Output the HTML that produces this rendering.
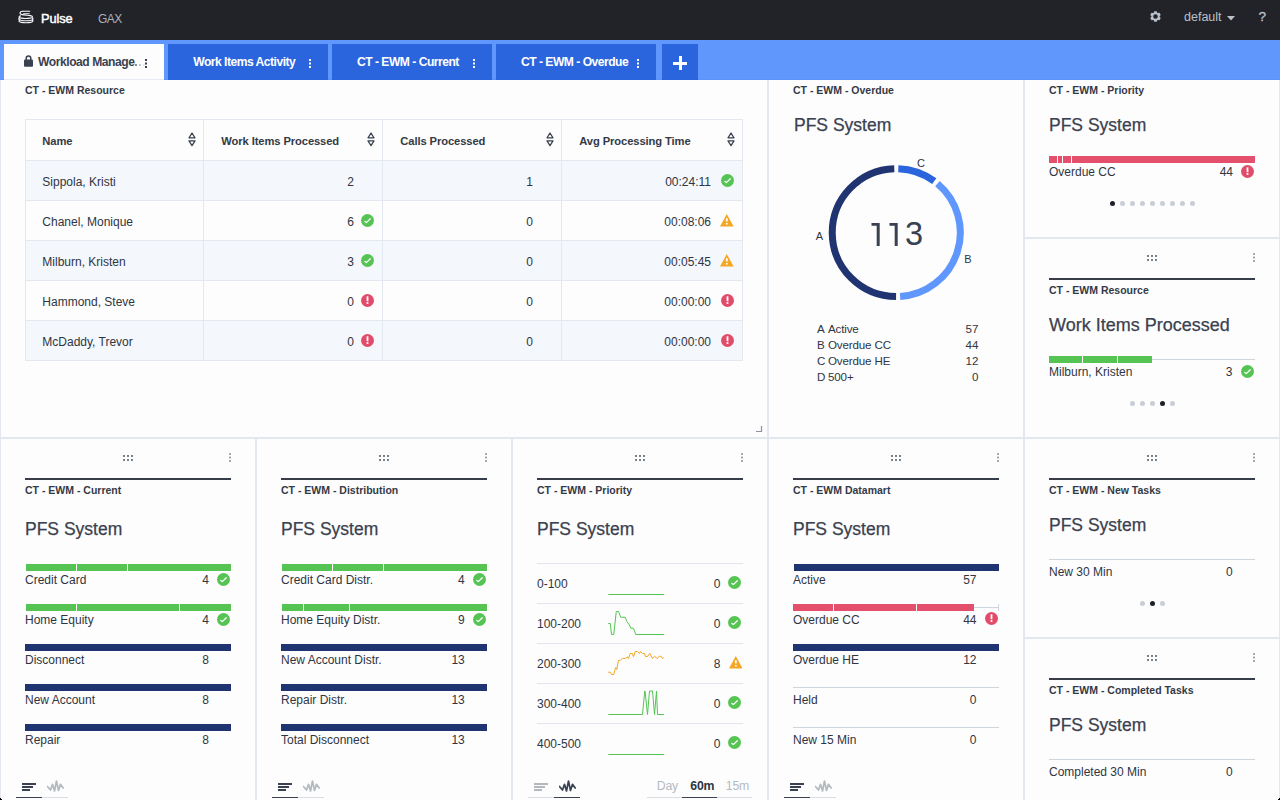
<!DOCTYPE html>
<html><head><meta charset="utf-8"><title>Pulse</title>
<style>
html,body{margin:0;padding:0;width:1280px;height:800px;overflow:hidden;background:#fdfdfd;font-family:"Liberation Sans", sans-serif;}
.t{position:absolute;white-space:nowrap;line-height:1;}
.r{position:absolute;}
.panel{position:absolute;box-sizing:border-box;border:1px solid #e3e8f0;background:#fdfdfd;}
</style></head><body>

<div class="r" style="left:0px;top:0px;width:1280px;height:40px;background:#212328;"></div>
<svg class="r" style="left:17px;top:10px" width="18" height="14.3" viewBox="0 0 18 16" preserveAspectRatio="none">
<g fill="none" stroke="#f4f6fa" stroke-width="1.25" stroke-linecap="round">
<path d="M5.6 1.4 H12.6"/>
<path d="M5.6 1.4 C2.4 1.6 2.2 4.4 5 5.2 C7.5 5.9 11 5.9 13.4 6.3"/>
<path d="M6.6 4.2 H12.2"/>
<path d="M13.4 6.3 C16.2 6.9 16.2 8.6 13.2 9.1 C10.5 9.5 6.5 9.5 4.2 9.1 C1.6 8.6 1.6 7.2 3.4 6.6"/>
<path d="M2.6 8.6 C1.2 9.4 1.4 10.8 4 11.5 C6.5 12.1 11.5 12.1 14 11.5 C16.4 10.8 16.4 9.6 15.2 8.9"/>
<path d="M2.6 11.3 C1.4 12.1 1.8 13.3 4.2 13.8 C6.8 14.3 11.2 14.3 13.8 13.8 C16.2 13.3 16.4 12.2 15.2 11.5"/>
</g></svg>
<div class="t" style="left:41px;top:12.76px;font-size:12.8px;font-weight:400;color:#ffffff;letter-spacing:-0.1px;-webkit-text-stroke:0.45px #ffffff;">Pulse</div>
<div class="t" style="left:98px;top:13.14px;font-size:12px;font-weight:400;color:#a9b0bc;letter-spacing:-0.5px;">GAX</div>
<svg class="r" style="left:1150px;top:10.9px" width="11" height="11" viewBox="0 0 11 11">
<path fill="#b9c0ca" fill-rule="evenodd" d="M3.79 1.66 L4.26 0.14 L6.74 0.14 L7.21 1.66 L7.97 2.10 L9.52 1.75 L10.76 3.89 L9.68 5.06 L9.68 5.94 L10.76 7.11 L9.52 9.25 L7.97 8.90 L7.21 9.34 L6.74 10.86 L4.26 10.86 L3.79 9.34 L3.03 8.90 L1.48 9.25 L0.24 7.11 L1.32 5.94 L1.32 5.06 L0.24 3.89 L1.48 1.75 L3.03 2.10 Z M5.5 3.2 A2.3 2.3 0 1 0 5.5 7.8 A2.3 2.3 0 1 0 5.5 3.2 Z"/>
</svg>
<div class="t" style="left:1184px;top:11.12px;font-size:12.5px;font-weight:400;color:#b9c0ca;">default</div>
<svg class="r" style="left:1227px;top:15.5px" width="8" height="5" viewBox="0 0 8 5"><path d="M0 0 H8 L4 4.5 Z" fill="#b9c0ca"/></svg>
<div class="t" style="left:1258.6px;top:10.09px;font-size:13.6px;font-weight:400;color:#b9c0ca;-webkit-text-stroke:0.3px #b9c0ca;">?</div>
<div class="r" style="left:0px;top:40px;width:1280px;height:40px;background:#6097fc;"></div>
<div class="r" style="left:0px;top:79px;width:1280px;height:1px;background:#5a92f8;"></div>
<div class="r" style="left:4px;top:44px;width:160px;height:36px;background:#fdfdfd;"></div>
<div class="r" style="left:4px;top:79px;width:160px;height:1px;background:#e6eaf1;"></div>
<svg class="r" style="left:24px;top:55px" width="9" height="12" viewBox="0 0 9 12">
<path d="M2.2 5 V3.3 A2.3 2.3 0 0 1 6.8 3.3 V5" fill="none" stroke="#3a4150" stroke-width="1.5"/>
<rect x="0" y="4.6" width="9" height="7.2" rx="1" fill="#3a4150"/></svg>
<div class="t" style="left:38px;top:55.56px;font-size:12.1px;font-weight:700;color:#3a4150;letter-spacing:-0.45px;">Workload Manage</div>
<div class="r" style="left:135px;top:64px;width:1.6px;height:1.8px;background:#8a8f99;"></div>
<div class="r" style="left:139px;top:64px;width:1.6px;height:1.8px;background:#c3c7ce;"></div>
<div class="r" style="left:143px;top:64px;width:1.6px;height:1.8px;background:#e6e8ec;"></div>
<svg class="r" style="left:145px;top:59px" width="2" height="10" viewBox="0 0 2 10"><rect x="0.00" y="0.00" width="2" height="2" fill="#3a4150"/><rect x="0.00" y="3.50" width="2" height="2" fill="#3a4150"/><rect x="0.00" y="7.00" width="2" height="2" fill="#3a4150"/></svg>
<div class="r" style="left:168px;top:44px;width:160px;height:36px;background:#2b65dd;"></div>
<div class="t" style="left:193.2px;top:55.56px;font-size:12.1px;font-weight:700;color:#ffffff;letter-spacing:-0.5px;">Work Items Activity</div>
<svg class="r" style="left:309px;top:59px" width="2" height="10" viewBox="0 0 2 10"><rect x="0.00" y="0.00" width="2" height="2" fill="#ffffff"/><rect x="0.00" y="3.50" width="2" height="2" fill="#ffffff"/><rect x="0.00" y="7.00" width="2" height="2" fill="#ffffff"/></svg>
<div class="r" style="left:332px;top:44px;width:160px;height:36px;background:#2b65dd;"></div>
<div class="t" style="left:357px;top:55.56px;font-size:12.1px;font-weight:700;color:#ffffff;letter-spacing:-0.5px;">CT - EWM - Current</div>
<svg class="r" style="left:473px;top:59px" width="2" height="10" viewBox="0 0 2 10"><rect x="0.00" y="0.00" width="2" height="2" fill="#ffffff"/><rect x="0.00" y="3.50" width="2" height="2" fill="#ffffff"/><rect x="0.00" y="7.00" width="2" height="2" fill="#ffffff"/></svg>
<div class="r" style="left:496px;top:44px;width:160px;height:36px;background:#2b65dd;"></div>
<div class="t" style="left:521px;top:55.56px;font-size:12.1px;font-weight:700;color:#ffffff;letter-spacing:-0.5px;">CT - EWM - Overdue</div>
<svg class="r" style="left:637px;top:59px" width="2" height="10" viewBox="0 0 2 10"><rect x="0.00" y="0.00" width="2" height="2" fill="#ffffff"/><rect x="0.00" y="3.50" width="2" height="2" fill="#ffffff"/><rect x="0.00" y="7.00" width="2" height="2" fill="#ffffff"/></svg>
<div class="r" style="left:662px;top:44px;width:36px;height:36px;background:#2b65dd;"></div>
<div class="r" style="left:679px;top:56px;width:2.6px;height:14px;background:#ffffff;"></div>
<div class="r" style="left:673px;top:62px;width:14px;height:2.6px;background:#ffffff;"></div>
<div class="panel" style="left:0;top:80px;width:768px;height:358px;border-top:none"></div>
<div class="panel" style="left:768px;top:80px;width:256px;height:358px;border-top:none"></div>
<div class="panel" style="left:1024px;top:80px;width:256px;height:158px;border-top:none"></div>
<div class="panel" style="left:1024px;top:238px;width:256px;height:200px"></div>
<div class="panel" style="left:0px;top:438px;width:256px;height:400px"></div>
<div class="panel" style="left:256px;top:438px;width:256px;height:400px"></div>
<div class="panel" style="left:512px;top:438px;width:256px;height:400px"></div>
<div class="panel" style="left:768px;top:438px;width:256px;height:400px"></div>
<div class="panel" style="left:1024px;top:438px;width:256px;height:200px"></div>
<div class="panel" style="left:1024px;top:638px;width:256px;height:200px"></div>
<div class="t" style="left:25px;top:85.11px;font-size:10.5px;font-weight:700;color:#333a46;">CT - EWM Resource</div>
<div class="r" style="left:25px;top:119px;width:718px;height:242px;background:#e3e8f0;"></div>
<div class="r" style="left:26px;top:120px;width:716px;height:40px;background:#fdfdfd;"></div>
<div class="r" style="left:26px;top:161px;width:716px;height:39px;background:#f4f7fb;"></div>
<div class="r" style="left:26px;top:201px;width:716px;height:39px;background:#fdfdfd;"></div>
<div class="r" style="left:26px;top:241px;width:716px;height:39px;background:#f4f7fb;"></div>
<div class="r" style="left:26px;top:281px;width:716px;height:39px;background:#fdfdfd;"></div>
<div class="r" style="left:26px;top:321px;width:716px;height:39px;background:#f4f7fb;"></div>
<div class="r" style="left:203px;top:119px;width:1px;height:242px;background:#e3e8f0;"></div>
<div class="r" style="left:382px;top:119px;width:1px;height:242px;background:#e3e8f0;"></div>
<div class="r" style="left:561px;top:119px;width:1px;height:242px;background:#e3e8f0;"></div>
<div class="t" style="left:42.3px;top:135.52px;font-size:11.2px;font-weight:700;color:#333a46;letter-spacing:-0.1px;">Name</div>
<svg class="r" style="left:188px;top:132.2px" width="8" height="15" viewBox="0 0 8 15"><path d="M4 1 L7 5.8 H1 Z M1 8.8 H7 L4 13.6 Z" fill="none" stroke="#3a4150" stroke-width="1.25" stroke-linejoin="round"/></svg>
<div class="t" style="left:221.3px;top:135.52px;font-size:11.2px;font-weight:700;color:#333a46;letter-spacing:-0.1px;">Work Items Processed</div>
<svg class="r" style="left:367px;top:132.2px" width="8" height="15" viewBox="0 0 8 15"><path d="M4 1 L7 5.8 H1 Z M1 8.8 H7 L4 13.6 Z" fill="none" stroke="#3a4150" stroke-width="1.25" stroke-linejoin="round"/></svg>
<div class="t" style="left:400.3px;top:135.52px;font-size:11.2px;font-weight:700;color:#333a46;letter-spacing:-0.1px;">Calls Processed</div>
<svg class="r" style="left:546px;top:132.2px" width="8" height="15" viewBox="0 0 8 15"><path d="M4 1 L7 5.8 H1 Z M1 8.8 H7 L4 13.6 Z" fill="none" stroke="#3a4150" stroke-width="1.25" stroke-linejoin="round"/></svg>
<div class="t" style="left:579.3px;top:135.52px;font-size:11.2px;font-weight:700;color:#333a46;letter-spacing:-0.1px;">Avg Processing Time</div>
<svg class="r" style="left:727px;top:132.2px" width="8" height="15" viewBox="0 0 8 15"><path d="M4 1 L7 5.8 H1 Z M1 8.8 H7 L4 13.6 Z" fill="none" stroke="#3a4150" stroke-width="1.25" stroke-linejoin="round"/></svg>
<div class="t" style="left:42.3px;top:175.84px;font-size:12px;font-weight:400;color:#2f3542;">Sippola, Kristi</div>
<div class="t" style="left:-46px;width:400px;text-align:right;top:175.84px;font-size:12px;font-weight:400;color:#2f3542;">2</div>
<div class="t" style="left:133px;width:400px;text-align:right;top:175.84px;font-size:12px;font-weight:400;color:#2f3542;">1</div>
<div class="t" style="left:311px;width:400px;text-align:right;top:175.84px;font-size:12px;font-weight:400;color:#2f3542;">00:24:11</div>
<svg class="r" style="left:721.0px;top:173.8px" width="13" height="13" viewBox="0 0 13 13"><circle cx="6.5" cy="6.5" r="6.5" fill="#55c453"/><path d="M3.9 7.4 L5.4 8.6 L9.3 4.7" fill="none" stroke="#fff" stroke-width="1.25" stroke-linecap="round" stroke-linejoin="round"/></svg>
<div class="t" style="left:42.3px;top:215.84px;font-size:12px;font-weight:400;color:#2f3542;">Chanel, Monique</div>
<div class="t" style="left:-46px;width:400px;text-align:right;top:215.84px;font-size:12px;font-weight:400;color:#2f3542;">6</div>
<svg class="r" style="left:361.0px;top:213.8px" width="13" height="13" viewBox="0 0 13 13"><circle cx="6.5" cy="6.5" r="6.5" fill="#55c453"/><path d="M3.9 7.4 L5.4 8.6 L9.3 4.7" fill="none" stroke="#fff" stroke-width="1.25" stroke-linecap="round" stroke-linejoin="round"/></svg>
<div class="t" style="left:133px;width:400px;text-align:right;top:215.84px;font-size:12px;font-weight:400;color:#2f3542;">0</div>
<div class="t" style="left:311px;width:400px;text-align:right;top:215.84px;font-size:12px;font-weight:400;color:#2f3542;">00:08:06</div>
<svg class="r" style="left:720.20px;top:214.00px" width="13.6" height="12.6" viewBox="0 0 13.6 12.6"><path d="M6.8 0 L13.6 12.6 L0 12.6 Z" fill="#f5a623"/><rect x="5.90" y="4.28" width="1.8" height="3.15" fill="#fff"/><rect x="5.90" y="9.01" width="1.8" height="1.5" fill="#fff"/></svg>
<div class="t" style="left:42.3px;top:255.84px;font-size:12px;font-weight:400;color:#2f3542;">Milburn, Kristen</div>
<div class="t" style="left:-46px;width:400px;text-align:right;top:255.84px;font-size:12px;font-weight:400;color:#2f3542;">3</div>
<svg class="r" style="left:361.0px;top:253.8px" width="13" height="13" viewBox="0 0 13 13"><circle cx="6.5" cy="6.5" r="6.5" fill="#55c453"/><path d="M3.9 7.4 L5.4 8.6 L9.3 4.7" fill="none" stroke="#fff" stroke-width="1.25" stroke-linecap="round" stroke-linejoin="round"/></svg>
<div class="t" style="left:133px;width:400px;text-align:right;top:255.84px;font-size:12px;font-weight:400;color:#2f3542;">0</div>
<div class="t" style="left:311px;width:400px;text-align:right;top:255.84px;font-size:12px;font-weight:400;color:#2f3542;">00:05:45</div>
<svg class="r" style="left:720.20px;top:254.00px" width="13.6" height="12.6" viewBox="0 0 13.6 12.6"><path d="M6.8 0 L13.6 12.6 L0 12.6 Z" fill="#f5a623"/><rect x="5.90" y="4.28" width="1.8" height="3.15" fill="#fff"/><rect x="5.90" y="9.01" width="1.8" height="1.5" fill="#fff"/></svg>
<div class="t" style="left:42.3px;top:295.84px;font-size:12px;font-weight:400;color:#2f3542;">Hammond, Steve</div>
<div class="t" style="left:-46px;width:400px;text-align:right;top:295.84px;font-size:12px;font-weight:400;color:#2f3542;">0</div>
<svg class="r" style="left:361.0px;top:293.8px" width="13" height="13" viewBox="0 0 13 13"><circle cx="6.5" cy="6.5" r="6.5" fill="#e24c6a"/><rect x="5.6" y="2.3" width="1.8" height="4.9" fill="#fff"/><rect x="5.6" y="8.1" width="1.8" height="1.8" fill="#fff"/></svg>
<div class="t" style="left:133px;width:400px;text-align:right;top:295.84px;font-size:12px;font-weight:400;color:#2f3542;">0</div>
<div class="t" style="left:311px;width:400px;text-align:right;top:295.84px;font-size:12px;font-weight:400;color:#2f3542;">00:00:00</div>
<svg class="r" style="left:721.0px;top:293.8px" width="13" height="13" viewBox="0 0 13 13"><circle cx="6.5" cy="6.5" r="6.5" fill="#e24c6a"/><rect x="5.6" y="2.3" width="1.8" height="4.9" fill="#fff"/><rect x="5.6" y="8.1" width="1.8" height="1.8" fill="#fff"/></svg>
<div class="t" style="left:42.3px;top:335.84px;font-size:12px;font-weight:400;color:#2f3542;">McDaddy, Trevor</div>
<div class="t" style="left:-46px;width:400px;text-align:right;top:335.84px;font-size:12px;font-weight:400;color:#2f3542;">0</div>
<svg class="r" style="left:361.0px;top:333.8px" width="13" height="13" viewBox="0 0 13 13"><circle cx="6.5" cy="6.5" r="6.5" fill="#e24c6a"/><rect x="5.6" y="2.3" width="1.8" height="4.9" fill="#fff"/><rect x="5.6" y="8.1" width="1.8" height="1.8" fill="#fff"/></svg>
<div class="t" style="left:133px;width:400px;text-align:right;top:335.84px;font-size:12px;font-weight:400;color:#2f3542;">0</div>
<div class="t" style="left:311px;width:400px;text-align:right;top:335.84px;font-size:12px;font-weight:400;color:#2f3542;">00:00:00</div>
<svg class="r" style="left:721.0px;top:333.8px" width="13" height="13" viewBox="0 0 13 13"><circle cx="6.5" cy="6.5" r="6.5" fill="#e24c6a"/><rect x="5.6" y="2.3" width="1.8" height="4.9" fill="#fff"/><rect x="5.6" y="8.1" width="1.8" height="1.8" fill="#fff"/></svg>
<svg class="r" style="left:755px;top:425px" width="8" height="8" viewBox="0 0 8 8"><path d="M6.5 1 V6.5 H1" fill="none" stroke="#8a93a0" stroke-width="1.2"/></svg>
<div class="t" style="left:793px;top:85.11px;font-size:10.5px;font-weight:700;color:#333a46;">CT - EWM - Overdue</div>
<div class="t" style="left:794px;top:117.19px;font-size:17.5px;font-weight:400;color:#3a4150;-webkit-text-stroke:0.25px #3a4150;">PFS System</div>
<svg class="r" style="left:768px;top:80px" width="256" height="358"><path d="M130.31 88.63 A64 64 0 0 1 166.28 101.09" fill="none" stroke="#2b65dd" stroke-width="7"/><path d="M169.44 103.57 A64 64 0 0 1 132.10 216.49" fill="none" stroke="#6097fc" stroke-width="7"/><path d="M128.08 216.60 A64 64 0 0 1 126.29 88.63" fill="none" stroke="#1f3470" stroke-width="7"/></svg>
<div class="t" style="left:721px;width:400px;text-align:center;top:157.69px;font-size:11px;font-weight:400;color:#2f3542;">C</div>
<div class="t" style="left:619.5px;width:400px;text-align:center;top:230.69px;font-size:11px;font-weight:400;color:#2f3542;">A</div>
<div class="t" style="left:768px;width:400px;text-align:center;top:253.69px;font-size:11px;font-weight:400;color:#2f3542;">B</div>
<svg class="r" style="left:868px;top:220px" width="16" height="30" viewBox="868 220 16 30"><path fill="#3a4150" d="M871.5 223 H879.7 V246 H876.7 V225.7 H871.5 Z"/></svg>
<svg class="r" style="left:886px;top:220px" width="16" height="30" viewBox="886 220 16 30"><path fill="#3a4150" d="M889.5 223 H897.7 V246 H894.7 V225.7 H889.5 Z"/></svg>
<div class="t" style="left:905px;top:218.29px;font-size:32.5px;font-weight:400;color:#3a4150;">3</div>
<div class="t" style="left:817px;top:323.18px;font-size:11.6px;font-weight:400;color:#2f3542;">A</div>
<div class="t" style="left:828px;top:323.18px;font-size:11.6px;font-weight:400;color:#2f3542;letter-spacing:-0.15px;">Active</div>
<div class="t" style="left:578.5px;width:400px;text-align:right;top:323.18px;font-size:11.6px;font-weight:400;color:#2f3542;">57</div>
<div class="t" style="left:817px;top:339.18px;font-size:11.6px;font-weight:400;color:#2f3542;">B</div>
<div class="t" style="left:828px;top:339.18px;font-size:11.6px;font-weight:400;color:#2f3542;letter-spacing:-0.15px;">Overdue CC</div>
<div class="t" style="left:578.5px;width:400px;text-align:right;top:339.18px;font-size:11.6px;font-weight:400;color:#2f3542;">44</div>
<div class="t" style="left:817px;top:355.18px;font-size:11.6px;font-weight:400;color:#2f3542;">C</div>
<div class="t" style="left:828px;top:355.18px;font-size:11.6px;font-weight:400;color:#2f3542;letter-spacing:-0.15px;">Overdue HE</div>
<div class="t" style="left:578.5px;width:400px;text-align:right;top:355.18px;font-size:11.6px;font-weight:400;color:#2f3542;">12</div>
<div class="t" style="left:817px;top:371.18px;font-size:11.6px;font-weight:400;color:#2f3542;">D</div>
<div class="t" style="left:828px;top:371.18px;font-size:11.6px;font-weight:400;color:#2f3542;letter-spacing:-0.15px;">500+</div>
<div class="t" style="left:578.5px;width:400px;text-align:right;top:371.18px;font-size:11.6px;font-weight:400;color:#2f3542;">0</div>
<div class="t" style="left:1049px;top:85.11px;font-size:10.5px;font-weight:700;color:#333a46;">CT - EWM - Priority</div>
<div class="t" style="left:1049px;top:117.19px;font-size:17.5px;font-weight:400;color:#3a4150;-webkit-text-stroke:0.25px #3a4150;">PFS System</div>
<div class="r" style="left:1049px;top:156px;width:206px;height:7px;background:#e44f6b;"></div>
<div class="r" style="left:1057px;top:156px;width:1px;height:7px;background:#fdfdfd;"></div>
<div class="r" style="left:1062px;top:156px;width:1px;height:7px;background:#fdfdfd;"></div>
<div class="r" style="left:1071px;top:156px;width:1px;height:7px;background:#fdfdfd;"></div>
<div class="t" style="left:1049px;top:165.84px;font-size:12px;font-weight:400;color:#2f3542;">Overdue CC</div>
<div class="t" style="left:833px;width:400px;text-align:right;top:165.84px;font-size:12px;font-weight:400;color:#2f3542;">44</div>
<svg class="r" style="left:1241.1px;top:164.9px" width="13" height="13" viewBox="0 0 13 13"><circle cx="6.5" cy="6.5" r="6.5" fill="#e24c6a"/><rect x="5.6" y="2.3" width="1.8" height="4.9" fill="#fff"/><rect x="5.6" y="8.1" width="1.8" height="1.8" fill="#fff"/></svg>
<div class="r" style="left:1109.9px;top:201.0px;width:5px;height:5px;border-radius:50%;background:#1d2029"></div>
<div class="r" style="left:1119.9px;top:201.0px;width:5px;height:5px;border-radius:50%;background:#c9ced6"></div>
<div class="r" style="left:1129.9px;top:201.0px;width:5px;height:5px;border-radius:50%;background:#c9ced6"></div>
<div class="r" style="left:1139.9px;top:201.0px;width:5px;height:5px;border-radius:50%;background:#c9ced6"></div>
<div class="r" style="left:1149.9px;top:201.0px;width:5px;height:5px;border-radius:50%;background:#c9ced6"></div>
<div class="r" style="left:1159.9px;top:201.0px;width:5px;height:5px;border-radius:50%;background:#c9ced6"></div>
<div class="r" style="left:1169.9px;top:201.0px;width:5px;height:5px;border-radius:50%;background:#c9ced6"></div>
<div class="r" style="left:1179.9px;top:201.0px;width:5px;height:5px;border-radius:50%;background:#c9ced6"></div>
<div class="r" style="left:1189.9px;top:201.0px;width:5px;height:5px;border-radius:50%;background:#c9ced6"></div>
<div class="r" style="left:1147px;top:255px;width:2px;height:2px;background:#7a8593;"></div>
<div class="r" style="left:1151px;top:255px;width:2px;height:2px;background:#7a8593;"></div>
<div class="r" style="left:1155px;top:255px;width:2px;height:2px;background:#7a8593;"></div>
<div class="r" style="left:1147px;top:259px;width:2px;height:2px;background:#7a8593;"></div>
<div class="r" style="left:1151px;top:259px;width:2px;height:2px;background:#7a8593;"></div>
<div class="r" style="left:1155px;top:259px;width:2px;height:2px;background:#7a8593;"></div>
<svg class="r" style="left:1253px;top:253px" width="2" height="10" viewBox="0 0 2 10"><rect x="0.10" y="0.10" width="1.8" height="1.8" fill="#8d96a2"/><rect x="0.10" y="3.60" width="1.8" height="1.8" fill="#8d96a2"/><rect x="0.10" y="7.10" width="1.8" height="1.8" fill="#8d96a2"/></svg>
<div class="r" style="left:1049px;top:278px;width:206px;height:2px;background:#363c48;"></div>
<div class="t" style="left:1049px;top:285.11px;font-size:10.5px;font-weight:700;color:#333a46;">CT - EWM Resource</div>
<div class="t" style="left:1049px;top:315.76px;font-size:18px;font-weight:400;color:#3a4150;-webkit-text-stroke:0.25px #3a4150;">Work Items Processed</div>
<div class="r" style="left:1152px;top:359px;width:103px;height:1px;background:#cfd5dd;"></div>
<div class="r" style="left:1049px;top:356px;width:103px;height:7px;background:#55c453;"></div>
<div class="r" style="left:1082px;top:356px;width:1px;height:7px;background:#fdfdfd;"></div>
<div class="r" style="left:1117px;top:356px;width:1px;height:7px;background:#fdfdfd;"></div>
<div class="t" style="left:1049px;top:366.14px;font-size:12px;font-weight:400;color:#2f3542;">Milburn, Kristen</div>
<div class="t" style="left:832.5px;width:400px;text-align:right;top:366.14px;font-size:12px;font-weight:400;color:#2f3542;">3</div>
<svg class="r" style="left:1241.1px;top:365.0px" width="13" height="13" viewBox="0 0 13 13"><circle cx="6.5" cy="6.5" r="6.5" fill="#55c453"/><path d="M3.9 7.4 L5.4 8.6 L9.3 4.7" fill="none" stroke="#fff" stroke-width="1.25" stroke-linecap="round" stroke-linejoin="round"/></svg>
<div class="r" style="left:1129.9px;top:401.1px;width:5px;height:5px;border-radius:50%;background:#c9ced6"></div>
<div class="r" style="left:1139.9px;top:401.1px;width:5px;height:5px;border-radius:50%;background:#c9ced6"></div>
<div class="r" style="left:1149.9px;top:401.1px;width:5px;height:5px;border-radius:50%;background:#c9ced6"></div>
<div class="r" style="left:1159.9px;top:401.1px;width:5px;height:5px;border-radius:50%;background:#1d2029"></div>
<div class="r" style="left:1169.9px;top:401.1px;width:5px;height:5px;border-radius:50%;background:#c9ced6"></div>
<div class="r" style="left:123px;top:455px;width:2px;height:2px;background:#7a8593;"></div>
<div class="r" style="left:127px;top:455px;width:2px;height:2px;background:#7a8593;"></div>
<div class="r" style="left:131px;top:455px;width:2px;height:2px;background:#7a8593;"></div>
<div class="r" style="left:123px;top:459px;width:2px;height:2px;background:#7a8593;"></div>
<div class="r" style="left:127px;top:459px;width:2px;height:2px;background:#7a8593;"></div>
<div class="r" style="left:131px;top:459px;width:2px;height:2px;background:#7a8593;"></div>
<svg class="r" style="left:229px;top:453px" width="2" height="10" viewBox="0 0 2 10"><rect x="0.10" y="0.10" width="1.8" height="1.8" fill="#8d96a2"/><rect x="0.10" y="3.60" width="1.8" height="1.8" fill="#8d96a2"/><rect x="0.10" y="7.10" width="1.8" height="1.8" fill="#8d96a2"/></svg>
<div class="r" style="left:25px;top:478px;width:206px;height:2px;background:#363c48;"></div>
<div class="t" style="left:25px;top:485.11px;font-size:10.5px;font-weight:700;color:#333a46;">CT - EWM - Current</div>
<div class="t" style="left:25px;top:521.19px;font-size:17.5px;font-weight:400;color:#3a4150;-webkit-text-stroke:0.25px #3a4150;">PFS System</div>
<div class="r" style="left:26px;top:564px;width:205px;height:7px;background:#55c453;"></div>
<div class="r" style="left:76px;top:564px;width:1px;height:7px;background:#fdfdfd;"></div>
<div class="r" style="left:127px;top:564px;width:1px;height:7px;background:#fdfdfd;"></div>
<div class="t" style="left:25px;top:573.84px;font-size:12px;font-weight:400;color:#2f3542;">Credit Card</div>
<div class="t" style="left:-191.2px;width:400px;text-align:right;top:573.84px;font-size:12px;font-weight:400;color:#2f3542;">4</div>
<svg class="r" style="left:216.8px;top:572.5px" width="13" height="13" viewBox="0 0 13 13"><circle cx="6.5" cy="6.5" r="6.5" fill="#55c453"/><path d="M3.9 7.4 L5.4 8.6 L9.3 4.7" fill="none" stroke="#fff" stroke-width="1.25" stroke-linecap="round" stroke-linejoin="round"/></svg>
<div class="r" style="left:26px;top:604px;width:205px;height:7px;background:#55c453;"></div>
<div class="r" style="left:76px;top:604px;width:1px;height:7px;background:#fdfdfd;"></div>
<div class="r" style="left:179px;top:604px;width:1px;height:7px;background:#fdfdfd;"></div>
<div class="t" style="left:25px;top:613.84px;font-size:12px;font-weight:400;color:#2f3542;">Home Equity</div>
<div class="t" style="left:-191.2px;width:400px;text-align:right;top:613.84px;font-size:12px;font-weight:400;color:#2f3542;">4</div>
<svg class="r" style="left:216.8px;top:612.5px" width="13" height="13" viewBox="0 0 13 13"><circle cx="6.5" cy="6.5" r="6.5" fill="#55c453"/><path d="M3.9 7.4 L5.4 8.6 L9.3 4.7" fill="none" stroke="#fff" stroke-width="1.25" stroke-linecap="round" stroke-linejoin="round"/></svg>
<div class="r" style="left:25px;top:644px;width:206px;height:7px;background:#1f3470;"></div>
<div class="t" style="left:25px;top:653.84px;font-size:12px;font-weight:400;color:#2f3542;">Disconnect</div>
<div class="t" style="left:-191.2px;width:400px;text-align:right;top:653.84px;font-size:12px;font-weight:400;color:#2f3542;">8</div>
<div class="r" style="left:25px;top:684px;width:206px;height:7px;background:#1f3470;"></div>
<div class="t" style="left:25px;top:693.84px;font-size:12px;font-weight:400;color:#2f3542;">New Account</div>
<div class="t" style="left:-191.2px;width:400px;text-align:right;top:693.84px;font-size:12px;font-weight:400;color:#2f3542;">8</div>
<div class="r" style="left:25px;top:724px;width:206px;height:7px;background:#1f3470;"></div>
<div class="t" style="left:25px;top:733.84px;font-size:12px;font-weight:400;color:#2f3542;">Repair</div>
<div class="t" style="left:-191.2px;width:400px;text-align:right;top:733.84px;font-size:12px;font-weight:400;color:#2f3542;">8</div>
<div class="r" style="left:22px;top:782.5px;width:14px;height:2.1px;background:#3a4150;"></div>
<div class="r" style="left:22px;top:786px;width:11px;height:2.1px;background:#3a4150;"></div>
<div class="r" style="left:22px;top:789.2px;width:8px;height:2.1px;background:#3a4150;"></div>
<svg class="r" style="left:46.5px;top:780px" width="18" height="13" viewBox="0 0 18 13"><path d="M0.5 6.5 L3.5 10 L5.5 4.3 L7.5 11 L9.5 1 L11.5 10.5 L13.5 4.3 L16.2 8" fill="none" stroke="#b4b9c0" stroke-width="1.7" stroke-linejoin="round" stroke-linecap="round"/></svg>
<div class="r" style="left:16px;top:796.5px;width:52px;height:1.5px;background:#d9dee5;"></div>
<div class="r" style="left:16px;top:796.5px;width:26px;height:1.5px;background:#3a4150;"></div>
<div class="r" style="left:379px;top:455px;width:2px;height:2px;background:#7a8593;"></div>
<div class="r" style="left:383px;top:455px;width:2px;height:2px;background:#7a8593;"></div>
<div class="r" style="left:387px;top:455px;width:2px;height:2px;background:#7a8593;"></div>
<div class="r" style="left:379px;top:459px;width:2px;height:2px;background:#7a8593;"></div>
<div class="r" style="left:383px;top:459px;width:2px;height:2px;background:#7a8593;"></div>
<div class="r" style="left:387px;top:459px;width:2px;height:2px;background:#7a8593;"></div>
<svg class="r" style="left:485px;top:453px" width="2" height="10" viewBox="0 0 2 10"><rect x="0.10" y="0.10" width="1.8" height="1.8" fill="#8d96a2"/><rect x="0.10" y="3.60" width="1.8" height="1.8" fill="#8d96a2"/><rect x="0.10" y="7.10" width="1.8" height="1.8" fill="#8d96a2"/></svg>
<div class="r" style="left:281px;top:478px;width:206px;height:2px;background:#363c48;"></div>
<div class="t" style="left:281px;top:485.11px;font-size:10.5px;font-weight:700;color:#333a46;">CT - EWM - Distribution</div>
<div class="t" style="left:281px;top:521.19px;font-size:17.5px;font-weight:400;color:#3a4150;-webkit-text-stroke:0.25px #3a4150;">PFS System</div>
<div class="r" style="left:282px;top:564px;width:205px;height:7px;background:#55c453;"></div>
<div class="r" style="left:332px;top:564px;width:1px;height:7px;background:#fdfdfd;"></div>
<div class="r" style="left:383px;top:564px;width:1px;height:7px;background:#fdfdfd;"></div>
<div class="t" style="left:281px;top:573.84px;font-size:12px;font-weight:400;color:#2f3542;">Credit Card Distr.</div>
<div class="t" style="left:64.80000000000001px;width:400px;text-align:right;top:573.84px;font-size:12px;font-weight:400;color:#2f3542;">4</div>
<svg class="r" style="left:472.8px;top:572.5px" width="13" height="13" viewBox="0 0 13 13"><circle cx="6.5" cy="6.5" r="6.5" fill="#55c453"/><path d="M3.9 7.4 L5.4 8.6 L9.3 4.7" fill="none" stroke="#fff" stroke-width="1.25" stroke-linecap="round" stroke-linejoin="round"/></svg>
<div class="r" style="left:282px;top:604px;width:205px;height:7px;background:#55c453;"></div>
<div class="r" style="left:303px;top:604px;width:1px;height:7px;background:#fdfdfd;"></div>
<div class="r" style="left:349px;top:604px;width:1px;height:7px;background:#fdfdfd;"></div>
<div class="t" style="left:281px;top:613.84px;font-size:12px;font-weight:400;color:#2f3542;">Home Equity Distr.</div>
<div class="t" style="left:64.80000000000001px;width:400px;text-align:right;top:613.84px;font-size:12px;font-weight:400;color:#2f3542;">9</div>
<svg class="r" style="left:472.8px;top:612.5px" width="13" height="13" viewBox="0 0 13 13"><circle cx="6.5" cy="6.5" r="6.5" fill="#55c453"/><path d="M3.9 7.4 L5.4 8.6 L9.3 4.7" fill="none" stroke="#fff" stroke-width="1.25" stroke-linecap="round" stroke-linejoin="round"/></svg>
<div class="r" style="left:281px;top:644px;width:206px;height:7px;background:#1f3470;"></div>
<div class="t" style="left:281px;top:653.84px;font-size:12px;font-weight:400;color:#2f3542;">New Account Distr.</div>
<div class="t" style="left:64.80000000000001px;width:400px;text-align:right;top:653.84px;font-size:12px;font-weight:400;color:#2f3542;">13</div>
<div class="r" style="left:281px;top:684px;width:206px;height:7px;background:#1f3470;"></div>
<div class="t" style="left:281px;top:693.84px;font-size:12px;font-weight:400;color:#2f3542;">Repair Distr.</div>
<div class="t" style="left:64.80000000000001px;width:400px;text-align:right;top:693.84px;font-size:12px;font-weight:400;color:#2f3542;">13</div>
<div class="r" style="left:281px;top:724px;width:206px;height:7px;background:#1f3470;"></div>
<div class="t" style="left:281px;top:733.84px;font-size:12px;font-weight:400;color:#2f3542;">Total Disconnect</div>
<div class="t" style="left:64.80000000000001px;width:400px;text-align:right;top:733.84px;font-size:12px;font-weight:400;color:#2f3542;">13</div>
<div class="r" style="left:278px;top:782.5px;width:14px;height:2.1px;background:#3a4150;"></div>
<div class="r" style="left:278px;top:786px;width:11px;height:2.1px;background:#3a4150;"></div>
<div class="r" style="left:278px;top:789.2px;width:8px;height:2.1px;background:#3a4150;"></div>
<svg class="r" style="left:302.5px;top:780px" width="18" height="13" viewBox="0 0 18 13"><path d="M0.5 6.5 L3.5 10 L5.5 4.3 L7.5 11 L9.5 1 L11.5 10.5 L13.5 4.3 L16.2 8" fill="none" stroke="#b4b9c0" stroke-width="1.7" stroke-linejoin="round" stroke-linecap="round"/></svg>
<div class="r" style="left:272px;top:796.5px;width:52px;height:1.5px;background:#d9dee5;"></div>
<div class="r" style="left:272px;top:796.5px;width:26px;height:1.5px;background:#3a4150;"></div>
<div class="r" style="left:635px;top:455px;width:2px;height:2px;background:#7a8593;"></div>
<div class="r" style="left:639px;top:455px;width:2px;height:2px;background:#7a8593;"></div>
<div class="r" style="left:643px;top:455px;width:2px;height:2px;background:#7a8593;"></div>
<div class="r" style="left:635px;top:459px;width:2px;height:2px;background:#7a8593;"></div>
<div class="r" style="left:639px;top:459px;width:2px;height:2px;background:#7a8593;"></div>
<div class="r" style="left:643px;top:459px;width:2px;height:2px;background:#7a8593;"></div>
<svg class="r" style="left:741px;top:453px" width="2" height="10" viewBox="0 0 2 10"><rect x="0.10" y="0.10" width="1.8" height="1.8" fill="#8d96a2"/><rect x="0.10" y="3.60" width="1.8" height="1.8" fill="#8d96a2"/><rect x="0.10" y="7.10" width="1.8" height="1.8" fill="#8d96a2"/></svg>
<div class="r" style="left:537px;top:478px;width:206px;height:2px;background:#363c48;"></div>
<div class="t" style="left:537px;top:485.11px;font-size:10.5px;font-weight:700;color:#333a46;">CT - EWM - Priority</div>
<div class="t" style="left:537px;top:521.19px;font-size:17.5px;font-weight:400;color:#3a4150;-webkit-text-stroke:0.25px #3a4150;">PFS System</div>
<div class="r" style="left:537px;top:563px;width:206px;height:1px;background:#e1e6ee;"></div>
<div class="t" style="left:537px;top:577.84px;font-size:12px;font-weight:400;color:#2f3542;">0-100</div>
<div class="t" style="left:320.5px;width:400px;text-align:right;top:577.84px;font-size:12px;font-weight:400;color:#2f3542;">0</div>
<svg class="r" style="left:728.3px;top:576.0px" width="13" height="13" viewBox="0 0 13 13"><circle cx="6.5" cy="6.5" r="6.5" fill="#55c453"/><path d="M3.9 7.4 L5.4 8.6 L9.3 4.7" fill="none" stroke="#fff" stroke-width="1.25" stroke-linecap="round" stroke-linejoin="round"/></svg>
<div class="r" style="left:537px;top:603px;width:206px;height:1px;background:#e1e6ee;"></div>
<div class="t" style="left:537px;top:617.84px;font-size:12px;font-weight:400;color:#2f3542;">100-200</div>
<div class="t" style="left:320.5px;width:400px;text-align:right;top:617.84px;font-size:12px;font-weight:400;color:#2f3542;">0</div>
<svg class="r" style="left:728.3px;top:616.0px" width="13" height="13" viewBox="0 0 13 13"><circle cx="6.5" cy="6.5" r="6.5" fill="#55c453"/><path d="M3.9 7.4 L5.4 8.6 L9.3 4.7" fill="none" stroke="#fff" stroke-width="1.25" stroke-linecap="round" stroke-linejoin="round"/></svg>
<div class="r" style="left:537px;top:643px;width:206px;height:1px;background:#e1e6ee;"></div>
<div class="t" style="left:537px;top:657.84px;font-size:12px;font-weight:400;color:#2f3542;">200-300</div>
<div class="t" style="left:320.5px;width:400px;text-align:right;top:657.84px;font-size:12px;font-weight:400;color:#2f3542;">8</div>
<svg class="r" style="left:728.80px;top:656.20px" width="13.6" height="12.6" viewBox="0 0 13.6 12.6"><path d="M6.8 0 L13.6 12.6 L0 12.6 Z" fill="#f5a623"/><rect x="5.90" y="4.28" width="1.8" height="3.15" fill="#fff"/><rect x="5.90" y="9.01" width="1.8" height="1.5" fill="#fff"/></svg>
<div class="r" style="left:537px;top:683px;width:206px;height:1px;background:#e1e6ee;"></div>
<div class="t" style="left:537px;top:697.84px;font-size:12px;font-weight:400;color:#2f3542;">300-400</div>
<div class="t" style="left:320.5px;width:400px;text-align:right;top:697.84px;font-size:12px;font-weight:400;color:#2f3542;">0</div>
<svg class="r" style="left:728.3px;top:696.0px" width="13" height="13" viewBox="0 0 13 13"><circle cx="6.5" cy="6.5" r="6.5" fill="#55c453"/><path d="M3.9 7.4 L5.4 8.6 L9.3 4.7" fill="none" stroke="#fff" stroke-width="1.25" stroke-linecap="round" stroke-linejoin="round"/></svg>
<div class="r" style="left:537px;top:723px;width:206px;height:1px;background:#e1e6ee;"></div>
<div class="t" style="left:537px;top:737.84px;font-size:12px;font-weight:400;color:#2f3542;">400-500</div>
<div class="t" style="left:320.5px;width:400px;text-align:right;top:737.84px;font-size:12px;font-weight:400;color:#2f3542;">0</div>
<svg class="r" style="left:728.3px;top:736.0px" width="13" height="13" viewBox="0 0 13 13"><circle cx="6.5" cy="6.5" r="6.5" fill="#55c453"/><path d="M3.9 7.4 L5.4 8.6 L9.3 4.7" fill="none" stroke="#fff" stroke-width="1.25" stroke-linecap="round" stroke-linejoin="round"/></svg>
<svg class="r" style="left:600px;top:560px" width="80" height="200" viewBox="600 560 80 200"><g fill="none" stroke-width="1" stroke-linejoin="round"><path stroke="#55c453" d="M608.25 594.5 H664"/><path stroke="#55c453" d="M608.25 623.5 H610.25 L611.5 634.5 H613.75 L616.25 611.5 H618.5 L620.75 617.25 H625.25 L626.75 621.5 L629.5 625 L630.75 628.25 H633.5 L635.75 634.5 H664"/><path stroke="#f5a623" d="M608.25 672.25 L610.25 672.25 L611.5 674.5 L613.75 674.5 L614.75 670.5 L615.75 667.5 L616.75 669.5 L618.5 660.5 L620.5 660.25 L622.5 658.25 L625.5 658.5 L627.5 656.75 L628.5 658.5 L630.25 653.5 L632.5 653.5 L633.5 656.75 L635.25 651.5 L637.5 651.5 L639.5 653.5 L640.5 651.5 L642.5 653.5 L644.5 653.5 L645.5 656.5 L647.5 656.5 L649.75 653.25 L652.5 658.5 L654.5 656.25 L657 658.5 L659.5 656.25 L661.25 656.5 L662.5 658.5 L663.75 657.25"/><path stroke="#55c453" d="M608.25 714.5 H642.5 L644.75 691 H645 L647.5 714.5 L649.5 691 H652.5 L654.5 714.5 L656.5 691 L657.5 714.5 H664"/><path stroke="#55c453" d="M608.25 754.5 H664"/></g></svg>
<div class="r" style="left:534px;top:782.5px;width:14px;height:2.1px;background:#b4b9c0;"></div>
<div class="r" style="left:534px;top:786px;width:11px;height:2.1px;background:#b4b9c0;"></div>
<div class="r" style="left:534px;top:789.2px;width:8px;height:2.1px;background:#b4b9c0;"></div>
<svg class="r" style="left:558.5px;top:780px" width="18" height="13" viewBox="0 0 18 13"><path d="M0.5 6.5 L3.5 10 L5.5 4.3 L7.5 11 L9.5 1 L11.5 10.5 L13.5 4.3 L16.2 8" fill="none" stroke="#3a4150" stroke-width="1.7" stroke-linejoin="round" stroke-linecap="round"/></svg>
<div class="r" style="left:528px;top:796.5px;width:52px;height:1.5px;background:#d9dee5;"></div>
<div class="r" style="left:554px;top:796.5px;width:26px;height:1.5px;background:#3a4150;"></div>
<div class="t" style="left:467.29999999999995px;width:400px;text-align:center;top:780.19px;font-size:12.3px;font-weight:400;color:#b5bac2;letter-spacing:-0.3px;">Day</div>
<div class="t" style="left:502.29999999999995px;width:400px;text-align:center;top:780.19px;font-size:12.3px;font-weight:700;color:#2f3541;letter-spacing:-0.2px;">60m</div>
<div class="t" style="left:537.5px;width:400px;text-align:center;top:780.19px;font-size:12.3px;font-weight:400;color:#b5bac2;letter-spacing:-0.2px;">15m</div>
<div class="r" style="left:647px;top:796.5px;width:105px;height:1.5px;background:#d9dee5;"></div>
<div class="r" style="left:681.7px;top:796.5px;width:35.3px;height:1.5px;background:#3a4150;"></div>
<div class="r" style="left:891px;top:455px;width:2px;height:2px;background:#7a8593;"></div>
<div class="r" style="left:895px;top:455px;width:2px;height:2px;background:#7a8593;"></div>
<div class="r" style="left:899px;top:455px;width:2px;height:2px;background:#7a8593;"></div>
<div class="r" style="left:891px;top:459px;width:2px;height:2px;background:#7a8593;"></div>
<div class="r" style="left:895px;top:459px;width:2px;height:2px;background:#7a8593;"></div>
<div class="r" style="left:899px;top:459px;width:2px;height:2px;background:#7a8593;"></div>
<svg class="r" style="left:997px;top:453px" width="2" height="10" viewBox="0 0 2 10"><rect x="0.10" y="0.10" width="1.8" height="1.8" fill="#8d96a2"/><rect x="0.10" y="3.60" width="1.8" height="1.8" fill="#8d96a2"/><rect x="0.10" y="7.10" width="1.8" height="1.8" fill="#8d96a2"/></svg>
<div class="r" style="left:793px;top:478px;width:206px;height:2px;background:#363c48;"></div>
<div class="t" style="left:793px;top:485.11px;font-size:10.5px;font-weight:700;color:#333a46;">CT - EWM Datamart</div>
<div class="t" style="left:793px;top:521.19px;font-size:17.5px;font-weight:400;color:#3a4150;-webkit-text-stroke:0.25px #3a4150;">PFS System</div>
<div class="r" style="left:794px;top:564px;width:205px;height:7px;background:#1f3470;"></div>
<div class="t" style="left:793px;top:573.84px;font-size:12px;font-weight:400;color:#2f3542;">Active</div>
<div class="t" style="left:576.5px;width:400px;text-align:right;top:573.84px;font-size:12px;font-weight:400;color:#2f3542;">57</div>
<div class="r" style="left:974px;top:607px;width:25px;height:1px;background:#cfd5dd;"></div>
<div class="r" style="left:998px;top:604px;width:1px;height:7px;background:#cfd5dd;"></div>
<div class="r" style="left:793px;top:604px;width:181px;height:7px;background:#e44f6b;"></div>
<div class="r" style="left:833px;top:604px;width:1px;height:7px;background:#fdfdfd;"></div>
<div class="r" style="left:916px;top:604px;width:1px;height:7px;background:#fdfdfd;"></div>
<div class="t" style="left:793px;top:613.84px;font-size:12px;font-weight:400;color:#2f3542;">Overdue CC</div>
<div class="t" style="left:576.5px;width:400px;text-align:right;top:613.84px;font-size:12px;font-weight:400;color:#2f3542;">44</div>
<svg class="r" style="left:985.0px;top:612.4px" width="13" height="13" viewBox="0 0 13 13"><circle cx="6.5" cy="6.5" r="6.5" fill="#e24c6a"/><rect x="5.6" y="2.3" width="1.8" height="4.9" fill="#fff"/><rect x="5.6" y="8.1" width="1.8" height="1.8" fill="#fff"/></svg>
<div class="r" style="left:793px;top:644px;width:206px;height:7px;background:#1f3470;"></div>
<div class="t" style="left:793px;top:653.84px;font-size:12px;font-weight:400;color:#2f3542;">Overdue HE</div>
<div class="t" style="left:576.5px;width:400px;text-align:right;top:653.84px;font-size:12px;font-weight:400;color:#2f3542;">12</div>
<div class="r" style="left:793px;top:687px;width:206px;height:1px;background:#cfd5dd;"></div>
<div class="t" style="left:793px;top:693.84px;font-size:12px;font-weight:400;color:#2f3542;">Held</div>
<div class="t" style="left:576.5px;width:400px;text-align:right;top:693.84px;font-size:12px;font-weight:400;color:#2f3542;">0</div>
<div class="r" style="left:793px;top:727px;width:206px;height:1px;background:#cfd5dd;"></div>
<div class="t" style="left:793px;top:733.84px;font-size:12px;font-weight:400;color:#2f3542;">New 15 Min</div>
<div class="t" style="left:576.5px;width:400px;text-align:right;top:733.84px;font-size:12px;font-weight:400;color:#2f3542;">0</div>
<div class="r" style="left:790px;top:782.5px;width:14px;height:2.1px;background:#3a4150;"></div>
<div class="r" style="left:790px;top:786px;width:11px;height:2.1px;background:#3a4150;"></div>
<div class="r" style="left:790px;top:789.2px;width:8px;height:2.1px;background:#3a4150;"></div>
<svg class="r" style="left:814.5px;top:780px" width="18" height="13" viewBox="0 0 18 13"><path d="M0.5 6.5 L3.5 10 L5.5 4.3 L7.5 11 L9.5 1 L11.5 10.5 L13.5 4.3 L16.2 8" fill="none" stroke="#b4b9c0" stroke-width="1.7" stroke-linejoin="round" stroke-linecap="round"/></svg>
<div class="r" style="left:784px;top:796.5px;width:52px;height:1.5px;background:#d9dee5;"></div>
<div class="r" style="left:784px;top:796.5px;width:26px;height:1.5px;background:#3a4150;"></div>
<div class="r" style="left:1147px;top:455px;width:2px;height:2px;background:#7a8593;"></div>
<div class="r" style="left:1151px;top:455px;width:2px;height:2px;background:#7a8593;"></div>
<div class="r" style="left:1155px;top:455px;width:2px;height:2px;background:#7a8593;"></div>
<div class="r" style="left:1147px;top:459px;width:2px;height:2px;background:#7a8593;"></div>
<div class="r" style="left:1151px;top:459px;width:2px;height:2px;background:#7a8593;"></div>
<div class="r" style="left:1155px;top:459px;width:2px;height:2px;background:#7a8593;"></div>
<svg class="r" style="left:1253px;top:453px" width="2" height="10" viewBox="0 0 2 10"><rect x="0.10" y="0.10" width="1.8" height="1.8" fill="#8d96a2"/><rect x="0.10" y="3.60" width="1.8" height="1.8" fill="#8d96a2"/><rect x="0.10" y="7.10" width="1.8" height="1.8" fill="#8d96a2"/></svg>
<div class="r" style="left:1049px;top:478px;width:206px;height:2px;background:#363c48;"></div>
<div class="t" style="left:1049px;top:485.11px;font-size:10.5px;font-weight:700;color:#333a46;">CT - EWM - New Tasks</div>
<div class="t" style="left:1049px;top:517.19px;font-size:17.5px;font-weight:400;color:#3a4150;-webkit-text-stroke:0.25px #3a4150;">PFS System</div>
<div class="r" style="left:1049px;top:559px;width:206px;height:1px;background:#cfd5dd;"></div>
<div class="t" style="left:1049px;top:565.84px;font-size:12px;font-weight:400;color:#2f3542;">New 30 Min</div>
<div class="t" style="left:832.8px;width:400px;text-align:right;top:565.84px;font-size:12px;font-weight:400;color:#2f3542;">0</div>
<div class="r" style="left:1140.0px;top:601.2px;width:5px;height:5px;border-radius:50%;background:#c9ced6"></div>
<div class="r" style="left:1149.8px;top:601.2px;width:5px;height:5px;border-radius:50%;background:#1d2029"></div>
<div class="r" style="left:1159.8px;top:601.2px;width:5px;height:5px;border-radius:50%;background:#c9ced6"></div>
<div class="r" style="left:1147px;top:655px;width:2px;height:2px;background:#7a8593;"></div>
<div class="r" style="left:1151px;top:655px;width:2px;height:2px;background:#7a8593;"></div>
<div class="r" style="left:1155px;top:655px;width:2px;height:2px;background:#7a8593;"></div>
<div class="r" style="left:1147px;top:659px;width:2px;height:2px;background:#7a8593;"></div>
<div class="r" style="left:1151px;top:659px;width:2px;height:2px;background:#7a8593;"></div>
<div class="r" style="left:1155px;top:659px;width:2px;height:2px;background:#7a8593;"></div>
<svg class="r" style="left:1253px;top:653px" width="2" height="10" viewBox="0 0 2 10"><rect x="0.10" y="0.10" width="1.8" height="1.8" fill="#8d96a2"/><rect x="0.10" y="3.60" width="1.8" height="1.8" fill="#8d96a2"/><rect x="0.10" y="7.10" width="1.8" height="1.8" fill="#8d96a2"/></svg>
<div class="r" style="left:1049px;top:678px;width:206px;height:2px;background:#363c48;"></div>
<div class="t" style="left:1049px;top:685.11px;font-size:10.5px;font-weight:700;color:#333a46;">CT - EWM - Completed Tasks</div>
<div class="t" style="left:1049px;top:717.19px;font-size:17.5px;font-weight:400;color:#3a4150;-webkit-text-stroke:0.25px #3a4150;">PFS System</div>
<div class="r" style="left:1049px;top:759px;width:206px;height:1px;background:#cfd5dd;"></div>
<div class="t" style="left:1049px;top:765.84px;font-size:12px;font-weight:400;color:#2f3542;">Completed 30 Min</div>
<div class="t" style="left:832.8px;width:400px;text-align:right;top:765.84px;font-size:12px;font-weight:400;color:#2f3542;">0</div>
<div class="r" style="left:0px;top:798px;width:1px;height:2px;background:#000;"></div>
<div class="r" style="left:1px;top:799px;width:1px;height:1px;background:#000;"></div>
<div class="r" style="left:1279px;top:798px;width:1px;height:2px;background:#000;"></div>
<div class="r" style="left:1278px;top:799px;width:1px;height:1px;background:#000;"></div>
</body></html>
